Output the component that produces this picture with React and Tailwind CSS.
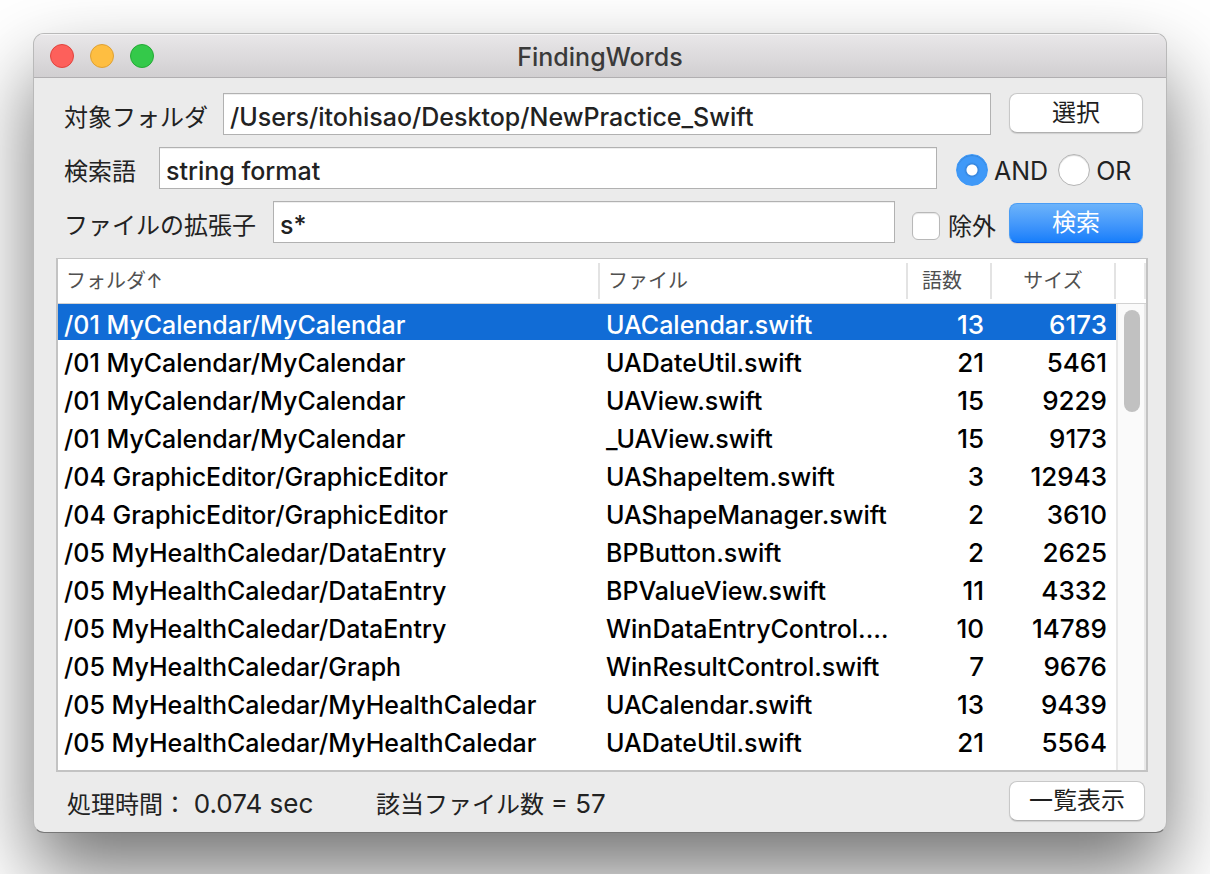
import React, { useState } from "react";

const FILES = [
  ["/01 MyCalendar/MyCalendar", "UACalendar.swift", 13, 6173],
  ["/01 MyCalendar/MyCalendar", "UADateUtil.swift", 21, 5461],
  ["/01 MyCalendar/MyCalendar", "UAView.swift", 15, 9229],
  ["/01 MyCalendar/MyCalendar", "_UAView.swift", 15, 9173],
  ["/04 GraphicEditor/GraphicEditor", "UAShapeItem.swift", 3, 12943],
  ["/04 GraphicEditor/GraphicEditor", "UAShapeManager.swift", 2, 3610],
  ["/05 MyHealthCaledar/DataEntry", "BPButton.swift", 2, 2625],
  ["/05 MyHealthCaledar/DataEntry", "BPValueView.swift", 11, 4332],
  ["/05 MyHealthCaledar/DataEntry", "WinDataEntryControl.…", 10, 14789],
  ["/05 MyHealthCaledar/Graph", "WinResultControl.swift", 7, 9676],
  ["/05 MyHealthCaledar/MyHealthCaledar", "UACalendar.swift", 13, 9439],
  ["/05 MyHealthCaledar/MyHealthCaledar", "UADateUtil.swift", 21, 5564],
];

const BUTTON =
  "h-10 shrink-0 rounded-lg border border-[#c8c8c8] border-b-[#b0b0b0] bg-white text-2xl leading-none text-[#1f1f1f] shadow-[0_1px_1px_rgba(0,0,0,0.12)]";
const FIELD =
  "h-[42px] min-w-0 flex-1 border border-[#b1b1b1] bg-white px-1.5 pt-1.5 text-[25px] font-medium text-[#222] shadow-[inset_0_1px_0_#efefef] outline-none";
const LABEL = "shrink-0 pt-2 text-2xl leading-8 text-[#222]";

function TitleBar() {
  return (
    <header className="grid h-11 grid-cols-[1fr_auto_1fr] items-center border-b border-[#b1afb1] bg-linear-to-b from-[#e9e7e9] to-[#d1cfd1] px-4 shadow-[inset_0_1px_0_#f5f4f5]">
      <div className="flex gap-4">
        <button aria-label="閉じる" className="size-6 rounded-full border border-[#e0443e] bg-[#fd605b]" />
        <button aria-label="しまう" className="size-6 rounded-full border border-[#dea034] bg-[#febe41]" />
        <button aria-label="拡大" className="size-6 rounded-full border border-[#24a935] bg-[#34c94a]" />
      </div>
      <h1 className="pt-0.5 text-[25px] leading-8 font-medium text-[#3a3a3a]">FindingWords</h1>
    </header>
  );
}

function Radio({ id, label, checked, onChange }) {
  return (
    <div className="flex items-center gap-1.5">
      <input
        id={id}
        type="radio"
        name="mode"
        checked={checked}
        onChange={onChange}
        className="size-8 appearance-none rounded-full border border-[#b4b4b4] bg-white shadow-[inset_0_1px_1px_rgba(0,0,0,0.15)] checked:border-[#3f99f8] checked:bg-[radial-gradient(circle,#fff_5px,#3585dd_6px,#3f99f8_8px)]"
      />
      <label htmlFor={id} className="pt-0.5 text-[25px] leading-7 text-[#222]">{label}</label>
    </div>
  );
}

function SearchForm() {
  const [mode, setMode] = useState("AND");
  return (
    <form className="flex flex-col gap-3 pt-[15px] pr-[23px] pl-[30px]" onSubmit={(e) => e.preventDefault()}>
      <div className="flex items-center">
        <label htmlFor="folder" className={`${LABEL} w-[159px]`}>対象フォルダ</label>
        <input id="folder" className={FIELD} defaultValue="/Users/itohisao/Desktop/NewPractice_Swift" />
        <button type="button" className={`${BUTTON} ml-[18px] w-[134px] self-start`}>選択</button>
      </div>
      <div className="flex items-center">
        <label htmlFor="words" className={`${LABEL} w-[95px]`}>検索語</label>
        <input id="words" className={FIELD} defaultValue="string format" />
        <div className="ml-[19px] flex w-[187px] shrink-0 items-center gap-2.5 pt-1">
          <Radio id="and" label="AND" checked={mode === "AND"} onChange={() => setMode("AND")} />
          <Radio id="or" label="OR" checked={mode === "OR"} onChange={() => setMode("OR")} />
        </div>
      </div>
      <div className="flex items-center">
        <label htmlFor="ext" className={`${LABEL} w-[209px]`}>ファイルの拡張子</label>
        <input id="ext" className={FIELD} defaultValue="s*" />
        <div className="ml-[17px] flex w-[97px] shrink-0 items-center gap-2 pt-2">
          <input
            id="exclude"
            type="checkbox"
            className="size-7 shrink-0 appearance-none rounded-md border border-[#b8b8b8] bg-white shadow-[inset_0_1px_1px_rgba(0,0,0,0.1)] checked:bg-[#3f99f8]"
          />
          <label htmlFor="exclude" className="shrink-0 pt-0.5 text-2xl leading-8 text-[#222]">除外</label>
        </div>
        <button
          type="submit"
          className="h-10 w-[134px] shrink-0 self-end rounded-lg border border-[#4a9df5] border-b-[#0b62f0] bg-linear-to-b from-[#6cb3fa] to-[#157efb] text-2xl leading-none text-white shadow-[0_1px_1px_rgba(0,0,0,0.12)]"
        >
          検索
        </button>
      </div>
    </form>
  );
}

function Heading({ children, className }) {
  return (
    <th scope="col" className="h-[45px] border-b border-[#d2d2d2] p-0 py-1 font-normal">
      <div className={`flex h-9 items-center border-r-2 border-[#e3e3e3] ${className}`}>{children}</div>
    </th>
  );
}

function Results() {
  const [selected, setSelected] = useState(0);
  return (
    <section className="mt-[15px] mr-[18px] ml-[22px] flex h-[514px] border-2 border-t border-[#c3c3c3] bg-white">
      <div className="min-w-0 flex-1 overflow-hidden">
        <table className="w-full table-fixed border-separate border-spacing-0">
          <colgroup>
            <col />
            <col className="w-[308px]" />
            <col className="w-[84px]" />
            <col className="w-[124px]" />
          </colgroup>
          <thead className="text-xl text-[#505050]">
            <tr>
              <Heading className="pl-2">フォルダ↑</Heading>
              <Heading className="pl-2">ファイル</Heading>
              <Heading className="justify-center pr-3.5">語数</Heading>
              <Heading className="justify-center">サイズ</Heading>
            </tr>
          </thead>
          <tbody className="text-[25px] leading-9 font-medium text-black">
            {FILES.map(([folder, file, words, size], i) => {
              const tone = i === selected ? "bg-[#116cd6] text-white" : "";
              return (
                <tr key={i} onClick={() => setSelected(i)}>
                  <td className="p-0 pb-0.5"><div className={`h-9 truncate pt-[3px] pl-1.5 ${tone}`}>{folder}</div></td>
                  <td className="p-0 pb-0.5"><div className={`h-9 truncate pt-[3px] pl-1.5 ${tone}`}>{file}</div></td>
                  <td className="p-0 pb-0.5"><div className={`h-9 pt-[3px] pr-2 text-right text-[26px] ${tone}`}>{words}</div></td>
                  <td className="p-0 pb-0.5"><div className={`h-9 pt-[3px] pr-[9px] text-right text-[26px] ${tone}`}>{size}</div></td>
                </tr>
              );
            })}
          </tbody>
        </table>
      </div>
      <div className="flex w-[30px] shrink-0 flex-col">
        <div className="h-[45px] border-b border-[#d2d2d2] py-1">
          <div className="h-9 border-r-2 border-[#e8e8e8]" />
        </div>
        <div className="flex-1 border-x-2 border-[#e8e8e8] bg-[#fafafa] px-1.5 pt-1.5">
          <div className="h-[102px] w-4 rounded-full bg-[#c1c1c1]" />
        </div>
      </div>
    </section>
  );
}

export default function App() {
  return (
    <div className="min-h-screen overflow-hidden bg-white pt-[33px] pr-[43px] pb-[41px] pl-[33px] font-['Inter','Noto_Sans_CJK_JP',sans-serif]">
      <main className="overflow-hidden rounded-[11px] border border-[#b9b9b9] border-b-[#777] bg-[#ebebeb] shadow-[0_40px_80px_rgba(0,0,0,0.55)]">
        <TitleBar />
        <SearchForm />
        <Results />
        <footer className="flex h-[60px] items-start pt-[9px] pr-[21px] pl-[33px] text-2xl text-[#222]">
          <p className="w-[309px] pt-1.5">
            処理時間： <span className="text-[26px]">0.074 sec</span>
          </p>
          <p className="flex-1 pt-1.5">
            該当ファイル数 <span className="text-[26px]">= 57</span>
          </p>
          <button type="button" className={`${BUTTON} w-[136px]`}>一覧表示</button>
        </footer>
      </main>
    </div>
  );
}
